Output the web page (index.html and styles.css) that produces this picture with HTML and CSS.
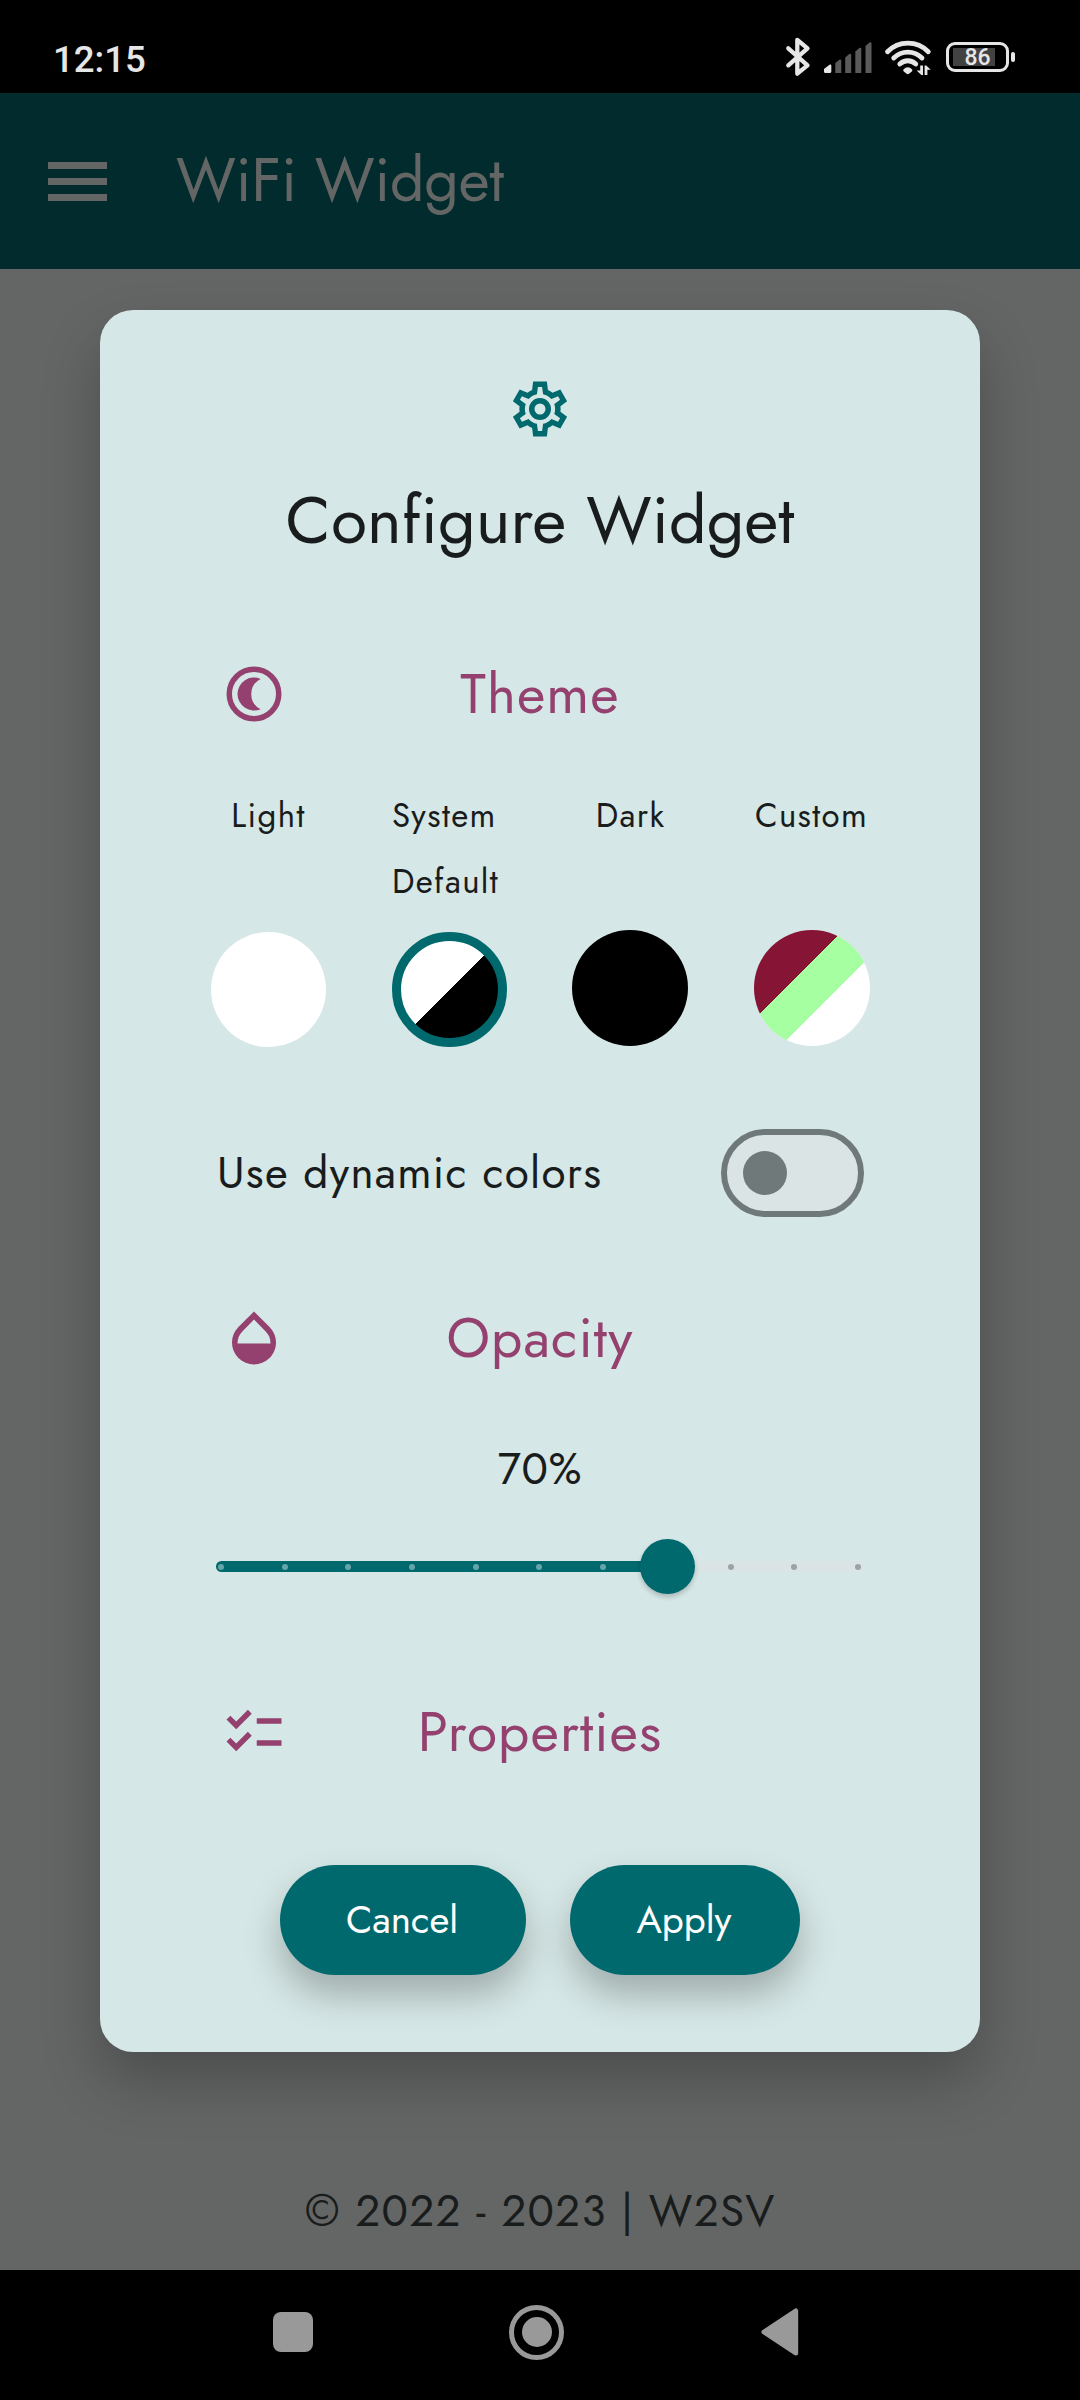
FILE: index.html
```html
<!DOCTYPE html>
<html lang="en">
<head>
<meta charset="utf-8">
<title>WiFi Widget</title>
<link rel="stylesheet" href="styles.css">
</head>
<body>
<div class="status-bar">
  <span class="clock">12:15</span>
  <div class="status-icons">
    <svg class="bluetooth" width="26" height="40" viewBox="785 37 26 40"><path d="M788.3 48.3L807.5 65.3L797.3 73.6V39.8L807.5 48.3L788.3 65.3" fill="none" stroke="#e6e6e6" stroke-width="4.3" stroke-linecap="round" stroke-linejoin="round"/></svg>
    <svg class="signal" width="48" height="32" viewBox="824 42 48 32"><path fill="#e6e6e6" d="M824 69l5.500-4.300q1.800-.6 1.800 1V71.500q0 1.500-1.500 1.500H825.500q-1.500 0-1.500-1.500z"/><path fill="#5a5a5a" d="M835.300 63l4-3.300q2-.6 2 1V73h-6zM845.200 57.500l4-3.500q2-.6 2 1V73h-6zM855.300 51.500l4-3.500q2-.6 2 1V73h-6zM865.500 46l4-3.500q2-.6 2 1V73h-6z"/></svg>
    <svg class="wifi" width="48" height="36" viewBox="884 40 48 36"><g fill="none" stroke="#e6e6e6" stroke-width="4.800" stroke-linecap="round"><path d="M887.500 51.800A28.500 28.500 0 0 1 928.300 51.800"/><path d="M893.700 58A20 20 0 0 1 922 58"/><path d="M899.800 64A11.500 11.500 0 0 1 915.800 64"/></g><path fill="#e6e6e6" d="M903.400 69.500q4.400-4.500 8.800 0q.6 1-.4 2l-2.800 2.300q-1.200.8-2.400 0l-2.800-2.300q-1-1-.4-2zM920.200 65.500h2.800V75h-1.600l-4.800-4.600h3.600zM924.600 75V65.500h1.600l4.600 4.300h-3.400V75z"/></svg>
    <div class="battery"><div class="battery-level"></div><span class="battery-text">86</span></div>
  </div>
</div>

<header class="app-bar">
  <div class="menu"><i></i><i></i><i></i></div>
  <h1 class="app-title">WiFi Widget</h1>
</header>

<main class="screen">
  <section class="dialog">
    <svg class="icon gear" viewBox="0 0 24 24"><path d="M12,8A4,4 0 0,1 16,12A4,4 0 0,1 12,16A4,4 0 0,1 8,12A4,4 0 0,1 12,8M12,10A2,2 0 0,0 10,12A2,2 0 0,0 12,14A2,2 0 0,0 14,12A2,2 0 0,0 12,10M9.500,22L9.130,18.930C8.500,18.680 7.960,18.340 7.440,17.940L4.600,19.100L2.150,14.850L4.570,12.970L4.500,12L4.570,11L2.150,9.150L4.600,4.900L7.440,6.050C7.960,5.660 8.500,5.320 9.130,5.070L9.500,2H14.500L14.870,5.070C15.500,5.320 16.040,5.660 16.560,6.050L19.400,4.900L21.850,9.150L19.430,11L19.500,12L19.430,13L21.850,14.850L19.400,19.100L16.560,17.950C16.040,18.340 15.500,18.680 14.870,18.930L14.500,22H9.500M11.250,4L10.880,6.610C9.680,6.860 8.620,7.500 7.850,8.390L5.440,7.350L4.690,8.650L6.800,10.200C6.400,11.370 6.400,12.640 6.800,13.800L4.680,15.360L5.430,16.660L7.860,15.620C8.630,16.500 9.680,17.140 10.870,17.380L11.240,20H12.760L13.130,17.390C14.320,17.140 15.370,16.500 16.140,15.620L18.570,16.660L19.320,15.360L17.200,13.810C17.600,12.640 17.600,11.370 17.200,10.200L19.310,8.650L18.560,7.350L16.150,8.390C15.380,7.500 14.320,6.860 13.120,6.610L12.750,4H11.250Z"/></svg>
    <h2 class="dialog-title">Configure Widget</h2>

    <div class="section theme-section">
      <svg class="icon" viewBox="0 0 24 24"><circle cx="12" cy="12" r="9" fill="none" stroke="currentColor" stroke-width="2"/><path d="M14.400 6.500A6 6 0 1 0 14.400 17.500A6.150 6.150 0 0 1 14.400 6.500z"/></svg>
      <h3 class="section-title">Theme</h3>
    </div>

    <div class="themes">
      <div class="theme"><span class="theme-label">Light</span><span class="swatch light"></span></div>
      <div class="theme"><span class="theme-label wrapped">System<br>Default</span><span class="swatch system"></span></div>
      <div class="theme"><span class="theme-label">Dark</span><span class="swatch dark"></span></div>
      <div class="theme"><span class="theme-label">Custom</span><span class="swatch custom"></span></div>
    </div>

    <div class="setting">
      <span class="setting-label">Use dynamic colors</span>
      <div class="switch"><div class="switch-thumb"></div></div>
    </div>

    <div class="section opacity-section">
      <svg class="icon" viewBox="0 0 24 24"><path d="M17.660 8L12 2.350 6.340 8C4.780 9.560 4 11.640 4 13.640s.78 4.110 2.340 5.670 3.610 2.350 5.660 2.350 4.100-.79 5.660-2.350S20 15.640 20 13.640 19.220 9.560 17.660 8zM6 14c.01-2 .62-3.270 1.760-4.400L12 5.270l4.240 4.380C17.380 10.770 17.990 12 18 14H6z"/></svg>
      <h3 class="section-title">Opacity</h3>
    </div>
    <div class="opacity-value">70%</div>
    <div class="slider">
      <div class="track active"><i></i><i></i><i></i><i></i><i></i><i></i><i></i></div>
      <div class="thumb"></div>
      <div class="track inactive"><i></i><i></i><i></i></div>
    </div>

    <div class="section properties-section">
      <svg class="icon" viewBox="0 0 24 24"><path d="M22 7h-9v2h9V7zm0 8h-9v2h9v-2zM5.540 11L2 7.460l1.410-1.410 2.120 2.120 4.240-4.240 1.410 1.410L5.540 11zm0 8L2 15.460l1.410-1.410 2.120 2.120 4.240-4.240 1.410 1.410L5.540 19z"/></svg>
      <h3 class="section-title">Properties</h3>
    </div>

    <div class="actions">
      <button class="button cancel">Cancel</button>
      <button class="button apply">Apply</button>
    </div>
  </section>
  <footer class="copyright">© 2022 - 2023 | W2SV</footer>
</main>

<nav class="nav-bar">
  <div class="nav-square"></div>
  <div class="nav-home"><div class="nav-home-dot"></div></div>
  <svg class="nav-back" width="38" height="48" viewBox="0 0 38 48"><path d="M3 24L34.700 3V45z" fill="#999" stroke="#999" stroke-width="5" stroke-linejoin="round"/></svg>
</nav>
</body>
</html>
```
FILE: styles.css
```css
* { box-sizing: border-box; }

body {
  margin: 0;
  width: 1080px;
  height: 2400px;
  display: flex;
  flex-direction: column;
  background: #000;
  color: #191c1c;
  font-family: Jost, Lato, sans-serif;
  font-weight: 400;
  white-space: nowrap;
}

h1, h2, h3 { margin: 0; font-weight: 400; }

/* system status bar */
.status-bar {
  height: 93px;
  padding: 24px 65px 0 53px;
  display: flex;
  justify-content: space-between;
  align-items: flex-start;
  font-family: Roboto, sans-serif;
  font-weight: 500;
  color: #e6e6e6;
}
.clock { font-size: 36.600px; line-height: 71px; height: 69px; }
.status-icons { display: flex; align-items: flex-start; }
.bluetooth { margin-top: 13px; }
.signal { margin: 18px 0 0 13px; }
.wifi { margin: 16px 0 0 12px; }
.battery {
  position: relative;
  width: 63px;
  height: 30px;
  margin: 18px 6px 0 14px;
  padding: 3px 4px;
  border: 3px solid #e6e6e6;
  border-radius: 9px;
}
.battery::after {
  content: "";
  position: absolute;
  left: 62px;
  top: 7px;
  width: 4px;
  height: 10px;
  border-radius: 2px;
  background: #e6e6e6;
}
.battery-level { width: 42px; height: 18px; background: #424242; }
.battery-text {
  position: absolute;
  inset: 0;
  font-size: 23px;
  line-height: 26px;
  text-align: center;
}

/* app bar */
.app-bar {
  height: 176px;
  padding-left: 48px;
  display: flex;
  align-items: center;
  background: #012b2c;
  color: #646665;
}
.menu { width: 59px; display: grid; gap: 9px; }
.menu i { height: 7px; background: #646665; }
.app-title {
  margin-left: 69px;
  font-size: 60.500px;
  line-height: 86px;
  letter-spacing: -0.2px;
  padding-bottom: 2px;
}

.screen {
  height: 2001px;
  padding: 41px 100px 0;
  background: #646665;
}

/* dialog */
.dialog {
  height: 1742px;
  padding: 66px 0 0;
  display: flex;
  flex-direction: column;
  border-radius: 33px;
  background: #d5e7e6;
  box-shadow: 0 30px 58px rgba(0, 0, 0, .24);
}
.icon { width: 66px; height: 66px; fill: currentColor; flex: none; }
.gear { align-self: center; color: #00696e; }
.dialog-title {
  margin-top: 34px;
  font-size: 66px;
  line-height: 88px;
  letter-spacing: .1px;
  text-align: center;
}
.section {
  display: grid;
  grid-template-columns: 66px 1fr 66px;
  align-items: center;
  padding: 0 121px;
  color: #94416f;
}
.section-title {
  font-size: 55px;
  line-height: 64px;
  padding-bottom: 1px;
  letter-spacing: 1.100px;
  text-align: center;
}
.theme-section { margin-top: 97px; }
.opacity-section { margin-top: 88px; }
.properties-section { margin-top: 105px; }

.themes {
  display: grid;
  grid-template-columns: repeat(4, 181px);
  margin: 55px 78px 0;
}
.theme { display: flex; flex-direction: column; align-items: center; }
.theme-label {
  height: 132px;
  padding-top: 1px;
  font-size: 33px;
  line-height: 66px;
  letter-spacing: 1.375px;
}
.wrapped { margin-right: 8px; }
.swatch { width: 116px; height: 116px; margin-top: 16px; border-radius: 50%; }
.light, .system { width: 115px; height: 115px; margin-top: 18px; }
.light { background: #fff; }
.system {
  border: 9px solid #00696e;
  background: linear-gradient(135deg, #fff 50%, #000 50%) border-box;
}
.dark { margin-right: 1px; background: #000; }
.custom {
  background: linear-gradient(135deg, #861434 38.400%, #a6ffa0 38.400% 61.600%, #fff 61.600%);
}

.setting {
  margin-top: 82px;
  padding: 0 116px 0 117px;
  display: flex;
  justify-content: space-between;
  align-items: center;
}
.setting-label { font-size: 44px; letter-spacing: 1.300px; line-height: 64px; }
.switch {
  width: 143px;
  height: 88px;
  padding: 16px;
  border: 6px solid #6f7979;
  border-radius: 44px;
  background: #dae4e5;
}
.switch-thumb { width: 44px; height: 44px; border-radius: 50%; background: #6f7979; }

.opacity-value {
  margin-top: 68px;
  font-size: 44px;
  line-height: 60px;
  letter-spacing: .7px;
  text-align: center;
}

.slider {
  height: 55px;
  margin: 40px 116px 0;
  display: flex;
  align-items: center;
}
.track { height: 11px; display: flex; align-items: center; }
.track i { width: 6px; height: 6px; border-radius: 50%; flex: none; }
.active {
  width: 425px;
  padding-left: 2px;
  gap: 57.700px;
  border-radius: 6px 0 0 6px;
  background: #00696e;
}
.active i { background: #66a5a8; }
.inactive {
  flex: 1;
  justify-content: flex-end;
  padding-right: 3px;
  gap: 57.700px;
  border-radius: 0 6px 6px 0;
  background: #dae4e5;
}
.inactive i { background: #9ba3a4; }
.thumb {
  width: 55px;
  height: 55px;
  margin: 0 -1px;
  border-radius: 50%;
  background: #00696e;
  box-shadow: 0 3px 5px rgba(0, 0, 0, .2);
  z-index: 1;
}

.actions { display: flex; justify-content: center; gap: 44px; margin-top: 100px; }
.button {
  height: 110px;
  padding: 0 2px 0 0;
  border: 0;
  border-radius: 55px;
  background: #00696e;
  color: #fff;
  font: 400 38.500px/56px Jost, Lato, sans-serif;
  box-shadow: 0 20px 36px rgba(0, 0, 0, .25);
}
.cancel { width: 246px; }
.apply { width: 230px; }

.copyright {
  margin-top: 129px;
  font-size: 44px;
  line-height: 60px;
  letter-spacing: 1.250px;
  text-align: center;
}

/* system navigation */
.nav-bar { height: 130px; display: flex; align-items: center; padding: 0 0 6px 273px; }
.nav-square { width: 40px; height: 40px; border-radius: 8px; background: #999; }
.nav-home {
  width: 55px;
  height: 55px;
  margin: 0 197px 0 196px;
  display: flex;
  align-items: center;
  justify-content: center;
  border: 5px solid #999;
  border-radius: 50%;
}
.nav-home-dot { width: 30px; height: 30px; border-radius: 50%; background: #999; }
```
